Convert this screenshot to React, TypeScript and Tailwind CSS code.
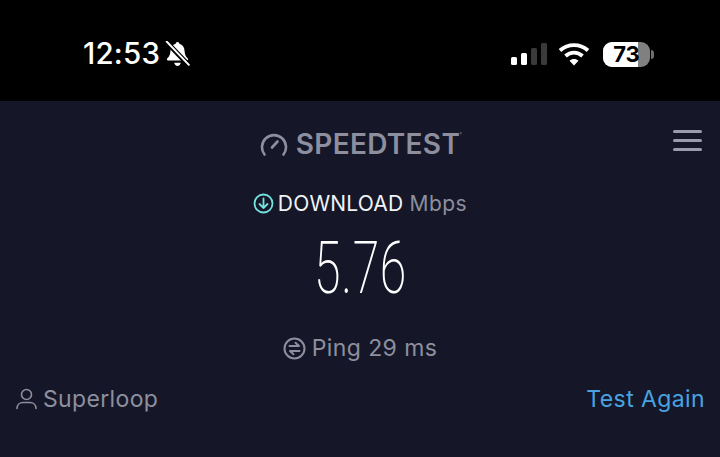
export default function App() {
  return (
    <div className="w-[720px] h-[457px] overflow-hidden flex flex-col bg-[#151728] font-['Inter',sans-serif]">
      <header className="h-[101px] bg-black flex items-start justify-between pt-[35px] pl-[83px] pr-[66px] text-white">
        <div className="flex items-center h-[38px] gap-[5px]">
          <span className="text-[29.5px] leading-none font-medium tracking-[0.2px]">12:53</span>
          <svg width="25" height="26" viewBox="1 1 22 24" fill="white">
            <path d="M12 2c1 0 1.6.7 1.7 1.6 3 .9 4.6 3.2 4.8 6.3.2 3.6 1 5.2 3 7.3.6.7.2 1.8-.8 1.8H3.300c-1 0-1.400-1.100-.8-1.800 2-2.100 2.800-3.700 3-7.300.2-3.100 1.800-5.400 4.800-6.300C10.400 2.700 11 2 12 2z" />
            <path d="M9 21h6c-.3 1.800-1.500 3-3 3s-2.700-1.200-3-3z" />
            <path d="M1 1 L23 24" stroke="black" strokeWidth="4.500" />
            <path d="M2 1.500 L22.500 23" stroke="white" strokeWidth="1.800" strokeLinecap="round" />
          </svg>
        </div>
        <div className="flex items-center h-[38px]">
          <svg width="37" height="24" viewBox="0 0 37 24" fill="white" className="mr-[11px]">
            <rect x="1" y="15" width="6" height="8" rx="1.500" />
            <rect x="11" y="11" width="6" height="12" rx="1.500" />
            <rect x="21" y="6" width="6" height="17" rx="1.500" fill="#3a3a3a" />
            <rect x="31" y="1" width="6" height="22" rx="1.500" fill="#3a3a3a" />
          </svg>
          <svg width="32" height="24" viewBox="0 0 32 24" fill="none" stroke="white" strokeWidth="3.800" className="mr-[13px]">
            <path d="M2 8.500C10 1.200 22 1.200 30 8.500" />
            <path d="M7.500 14C12.500 9.500 19.500 9.500 24.500 14" />
            <path d="M16 23.500 L11.500 18.800C14 16.500 18 16.500 20.500 18.800Z" fill="white" stroke="none" />
          </svg>
          <div className="flex items-center">
            <div className="relative w-[47px] h-[25px] rounded-[9px] overflow-hidden bg-[#808080]">
              <div className="w-[35px] h-full bg-white" />
              <span className="absolute inset-0 flex items-center justify-center text-black text-[22px] leading-none font-bold">73</span>
            </div>
            <div className="w-[3px] h-[9px] bg-[#6f6f6f] rounded-r-[3px] ml-[1px]" />
          </div>
        </div>
      </header>

      <main className="relative flex-1 flex flex-col items-center">
        <button className="absolute right-[18px] top-[29px] flex flex-col gap-[6px]">
          <span className="block w-[29px] h-[3px] rounded-full bg-[#9a9cae]" />
          <span className="block w-[29px] h-[3px] rounded-full bg-[#9a9cae]" />
          <span className="block w-[29px] h-[3px] rounded-full bg-[#9a9cae]" />
        </button>

        <div className="flex items-center mt-[27px] gap-[8px] h-[32px]">
          <svg width="28" height="24" viewBox="0 0 28 24" fill="none" stroke="#8d8f9f" strokeWidth="2.600" strokeLinecap="round">
            <path d="M4.500 22.500A12 12 0 1 1 23.500 22.500" />
            <path d="M12 15.500L17.500 9.500" />
          </svg>
          <span className="relative text-[28px] leading-none font-semibold text-[#8d8f9f] tracking-[0.3px]">
            SPEEDTEST
            <span className="absolute -right-[2px] top-[3px] text-[3px] leading-none font-normal">®</span>
          </span>
        </div>

        <div className="flex items-center mt-[27px] h-[32px]">
          <svg width="21" height="21" viewBox="0 0 21 21" fill="none" stroke="#74e2de" strokeWidth="1.800" strokeLinecap="round" strokeLinejoin="round" className="mr-[4px]">
            <circle cx="10.500" cy="10.500" r="9" />
            <path d="M10.500 5.500V15M6.500 11L10.500 15L14.500 11" />
          </svg>
          <span className="text-[21px] leading-none text-[#f2f3f6] tracking-[0.2px]">DOWNLOAD</span>
          <span className="text-[21px] leading-none text-[#8d8f9f] tracking-[0.5px] ml-[6px]">Mbps</span>
        </div>

        <div className="mt-[14px] text-[72px] leading-[72px] font-extralight text-white font-['Roboto',sans-serif] scale-x-[0.67] tracking-[1px]">5.76</div>

        <div className="flex items-center mt-[27px] h-[32px] gap-[6px]">
          <svg width="23" height="23" viewBox="0 0 23 23" fill="none" stroke="#8d8f9f" strokeWidth="2" strokeLinecap="round" strokeLinejoin="round">
            <circle cx="11.500" cy="11.500" r="10" />
            <path d="M6.500 9H16L12.500 5.800M16.500 14H7L10.500 17.200" />
          </svg>
          <span className="text-[23px] leading-none text-[#8d8f9f] tracking-[0.4px]">Ping 29 ms</span>
        </div>

        <div className="w-full flex items-center justify-between px-[15px] mt-[19px] h-[32px]">
          <div className="flex items-center gap-[5px]">
            <svg width="23" height="22" viewBox="0 0 23 22" fill="none" stroke="#8d8f9f" strokeWidth="1.600" strokeLinecap="round">
              <circle cx="11.500" cy="6.500" r="5" />
              <path d="M2 20.500c0-4 3-6 6-6h7c3 0 6 2 6 6" />
            </svg>
            <span className="text-[23px] leading-none text-[#8d8f9f] tracking-[0.35px]">Superloop</span>
          </div>
          <span className="text-[23px] leading-none text-[#48a3e0] tracking-[0.4px]">Test Again</span>
        </div>
      </main>
    </div>
  );
}
